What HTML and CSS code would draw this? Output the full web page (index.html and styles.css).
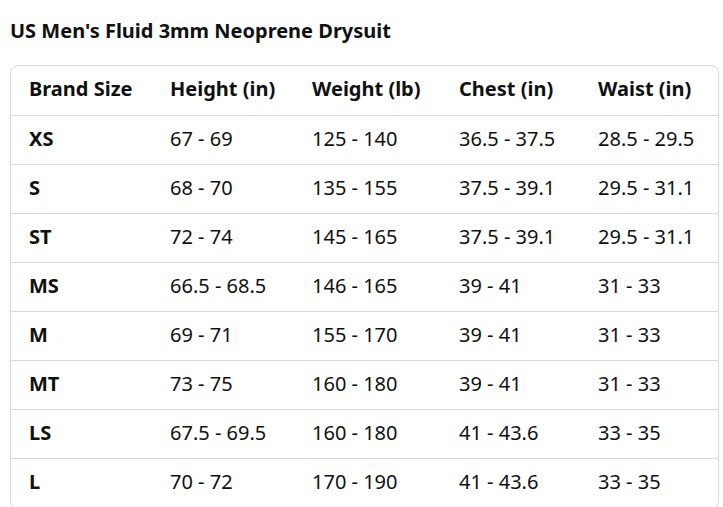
FILE: index.html
```html
<!DOCTYPE html>
<html lang="en">
<head>
<meta charset="utf-8">
<link rel="stylesheet" href="styles.css">
</head>
<body>
<h2 class="title">US Men's Fluid 3mm Neoprene Drysuit</h2>
<div class="box">
<table class="chart">
<colgroup>
<col class="c1"><col class="c2"><col class="c3"><col class="c4"><col class="c5">
</colgroup>
<thead>
<tr><th>Brand Size</th><th>Height (in)</th><th>Weight (lb)</th><th>Chest (in)</th><th>Waist (in)</th></tr>
</thead>
<tbody>
<tr><th>XS</th><td>67 - 69</td><td>125 - 140</td><td>36.5 - 37.5</td><td>28.5 - 29.5</td></tr>
<tr><th>S</th><td>68 - 70</td><td>135 - 155</td><td>37.5 - 39.1</td><td>29.5 - 31.1</td></tr>
<tr><th>ST</th><td>72 - 74</td><td>145 - 165</td><td>37.5 - 39.1</td><td>29.5 - 31.1</td></tr>
<tr><th>MS</th><td>66.5 - 68.5</td><td>146 - 165</td><td>39 - 41</td><td>31 - 33</td></tr>
<tr><th>M</th><td>69 - 71</td><td>155 - 170</td><td>39 - 41</td><td>31 - 33</td></tr>
<tr><th>MT</th><td>73 - 75</td><td>160 - 180</td><td>39 - 41</td><td>31 - 33</td></tr>
<tr><th>LS</th><td>67.5 - 69.5</td><td>160 - 180</td><td>41 - 43.6</td><td>33 - 35</td></tr>
<tr><th>L</th><td>70 - 72</td><td>170 - 190</td><td>41 - 43.6</td><td>33 - 35</td></tr>
</tbody>
</table>
</div>
</body>
</html>
```
FILE: styles.css
```css
html, body {
  margin: 0;
  padding: 0;
  background: #ffffff;
}
body {
  font-family: "Noto Sans", "Open Sans", "Liberation Sans", sans-serif;
  color: #0f1111;
  padding: 0 0 0 10px;
  overflow: hidden;
  height: 507px;
}
.title {
  margin: 0;
  padding-top: 18px;
  height: 65px;
  box-sizing: border-box;
  font-size: 20px;
  font-weight: 700;
  line-height: 26px;
}
.box {
  width: 709px;
  border: 1px solid #d5d9d9;
  border-radius: 8px;
  overflow: hidden;
  box-sizing: border-box;
}
.chart {
  border-collapse: collapse;
  width: 100%;
  table-layout: fixed;
}
.c1 { width: 141px; }
.c2 { width: 142px; }
.c3 { width: 147px; }
.c4 { width: 139px; }
.c5 { width: 140px; }
.chart th, .chart td {
  text-align: left;
  padding: 0 0 3px 18px;
  font-size: 20px;
  line-height: 26px;
  height: 45px;
  white-space: nowrap;
  border-bottom: 1px solid #d5d9d9;
}
.chart thead th {
  height: 46px;
}
.chart th {
  font-weight: 700;
}
.chart td {
  font-weight: 400;
}
```
